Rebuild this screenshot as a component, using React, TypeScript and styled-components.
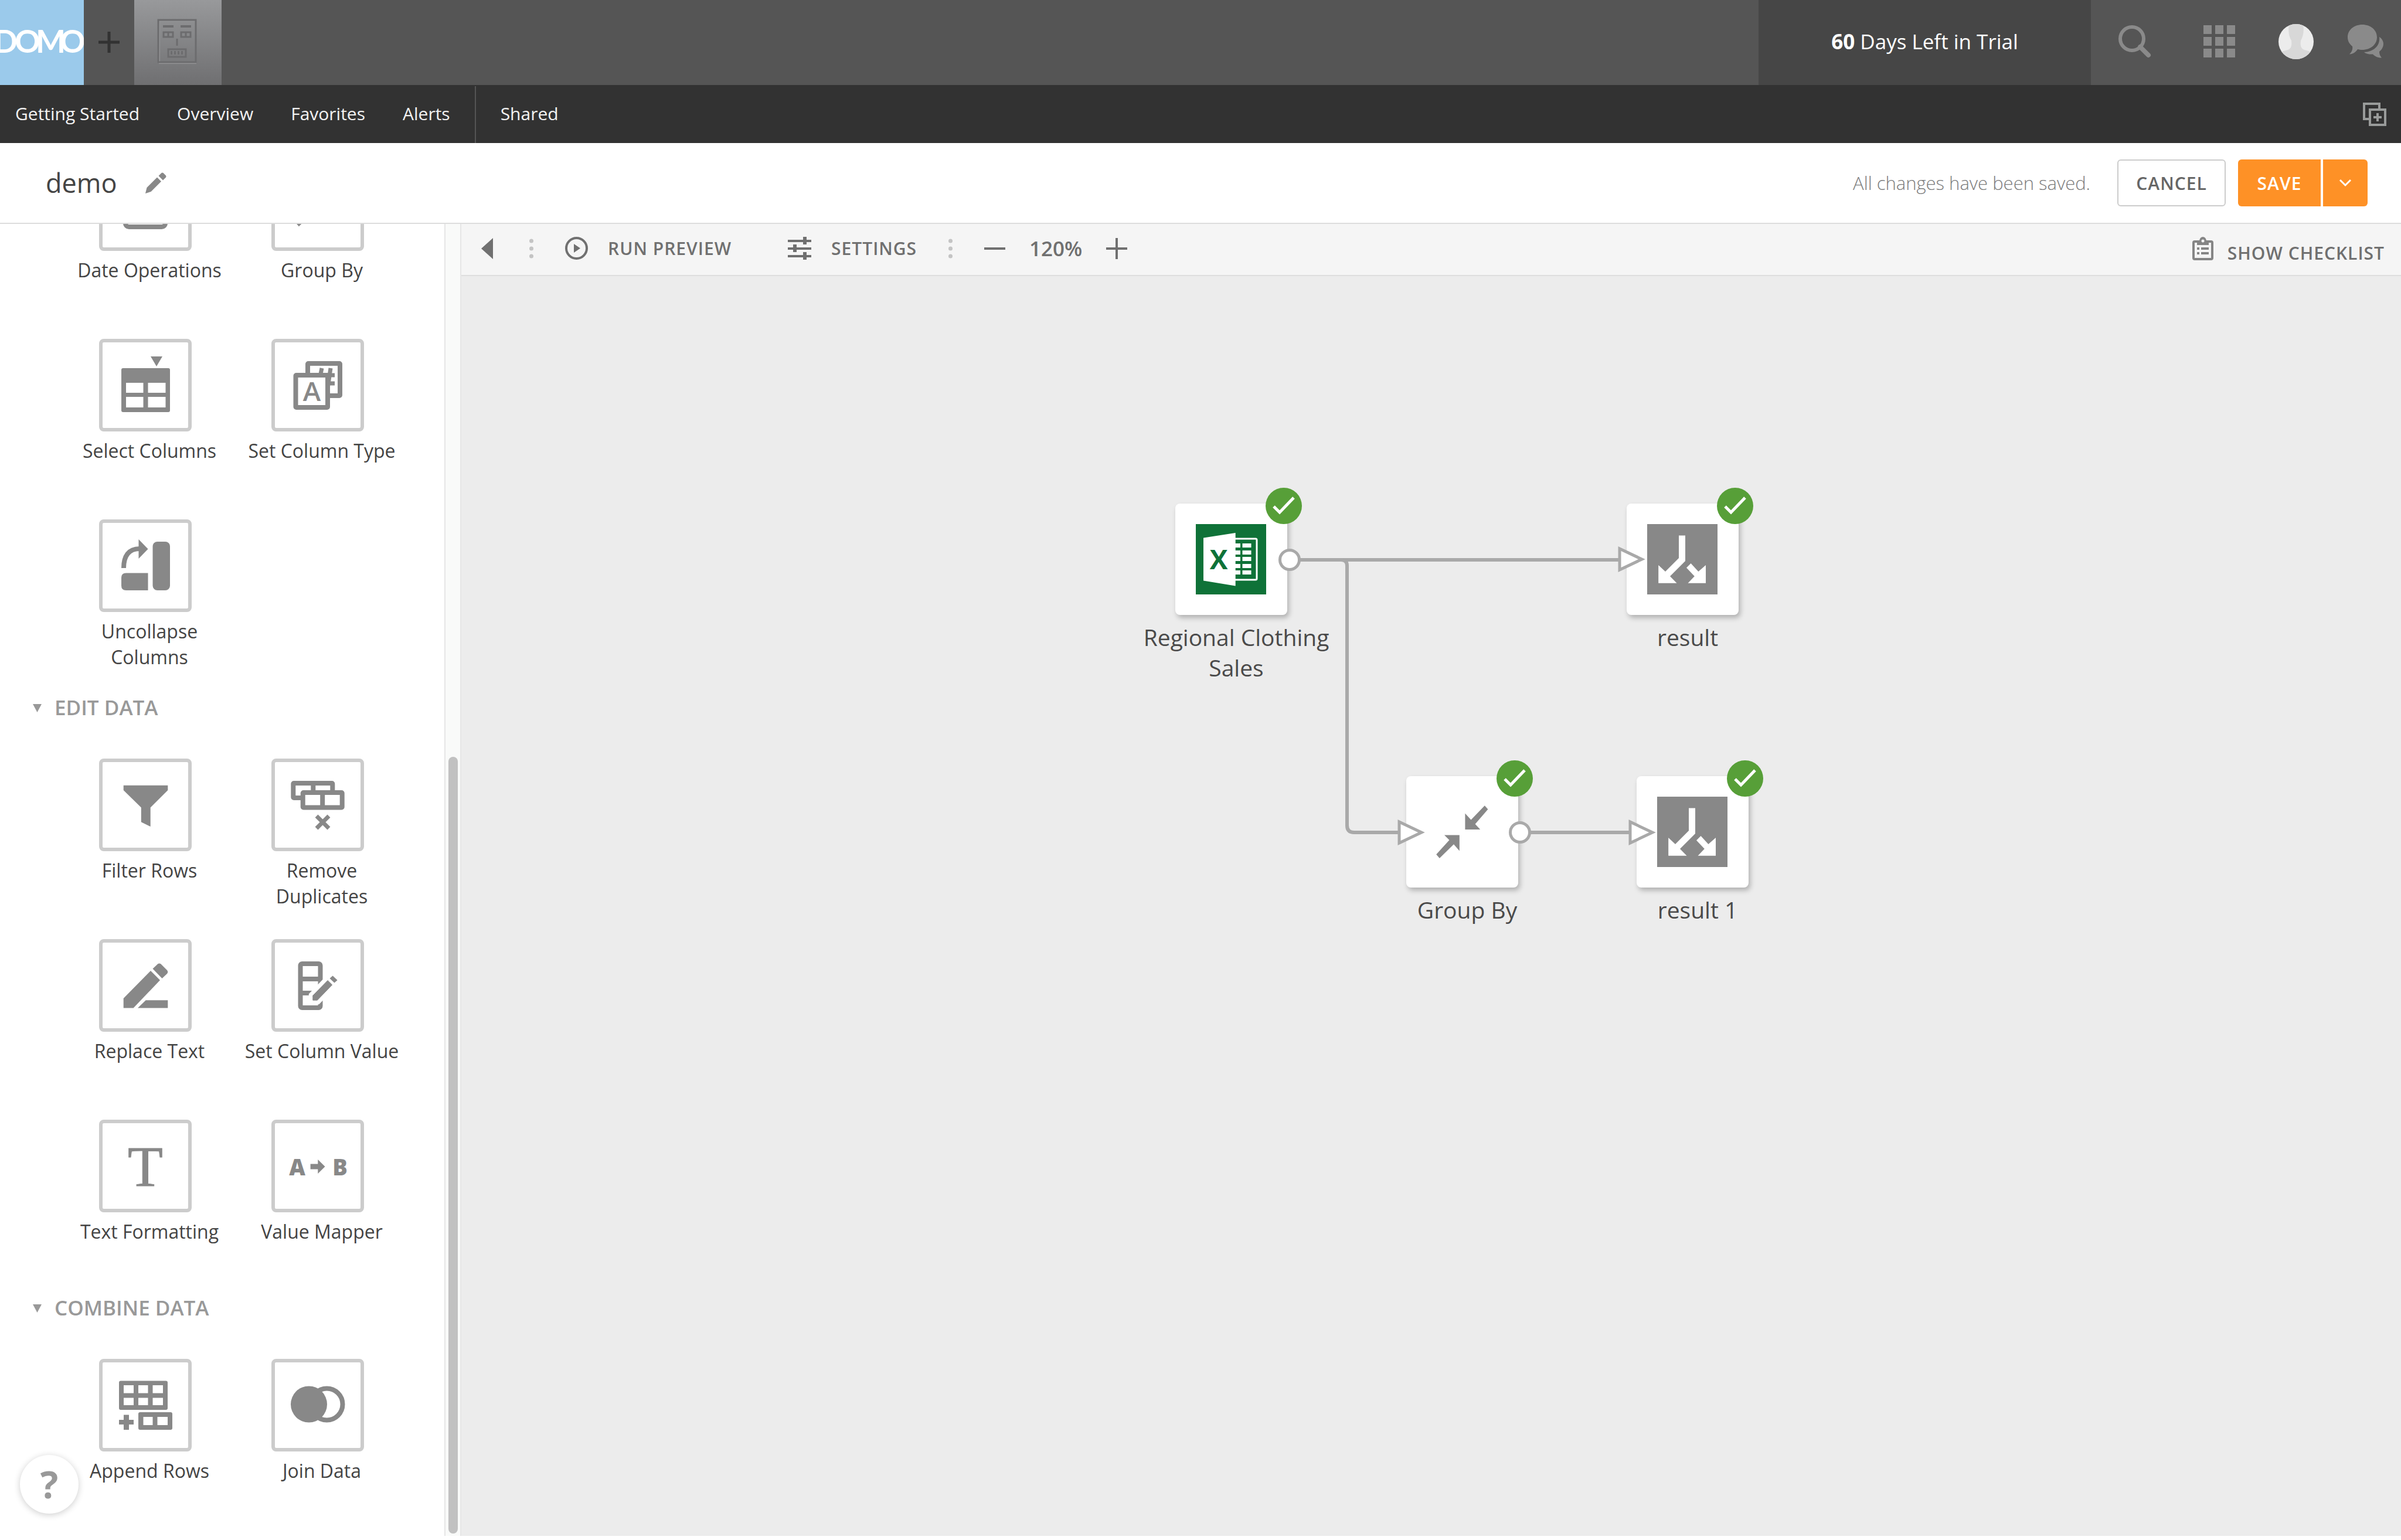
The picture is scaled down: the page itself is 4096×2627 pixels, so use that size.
import React from 'react';
import styled, { createGlobalStyle, css } from 'styled-components';

const GlobalStyle = createGlobalStyle`
  *, *::before, *::after { box-sizing: border-box; }
  body { margin: 0; background: #fff; font-family: "Open Sans", "Noto Sans", sans-serif; color: #444; }
  button { font: inherit; color: inherit; background: none; border: 0; padding: 0; margin: 0; cursor: pointer; }
  h1, h2, p, ul { margin: 0; padding: 0; font-weight: 400; }
  ul { list-style: none; }
  svg { display: block; }
`;

const GREY = '#888';
const TOOL = '#707070';
const WIRE = '#a9a9a9';

const actionText = css`
  font-size: 30px;
  font-weight: 600;
  letter-spacing: 1px;
`;

const Page = styled.div`
  display: flex;
  flex-direction: column;
  height: 100vh;
  padding-bottom: 7px;
  overflow: hidden;
`;

/* ---------- top bar ---------- */

const TopBar = styled.header`
  display: flex;
  flex: none;
  height: 145px;
  background: #555;
`;

const Logo = styled.a`
  width: 143px;
  background: #9bcaeb;
`;

const AddButton = styled.button`
  display: flex;
  align-items: center;
  justify-content: center;
  width: 86px;
  padding-bottom: 2px;
`;

const Brand = styled.button`
  width: 149px;
  background: linear-gradient(#98999b, #6f6f71);
`;

const TopRight = styled.div`
  display: flex;
  margin-left: auto;
`;

const Trial = styled.div`
  display: flex;
  align-items: center;
  justify-content: center;
  width: 567px;
  padding-bottom: 4px;
  background: #464646;
  color: #fff;
  font-size: 35px;
  line-height: 46px;
  white-space: pre;
`;

const TopIcons = styled.div`
  display: flex;
  align-items: center;
  gap: 58px;
  padding: 0 30px 4px 47px;
`;

const IconButton = styled.button<{ $after?: number }>`
  flex: none;
  margin-right: ${(p) => p.$after ?? 0}px;
`;

/* ---------- navigation ---------- */

const Nav = styled.nav`
  display: flex;
  flex: none;
  height: 99px;
  padding-right: 25px;
  background: #323232;
`;

const NavGroup = styled.div<{ $divided?: boolean }>`
  display: flex;
  align-items: center;
  gap: 64px;
  margin-top: 2px;
  padding: 0 42px 4px 42px;
  ${(p) =>
    p.$divided &&
    css`
      padding-left: 26px;
      border-right: 2px solid #555;
    `}
`;

const NavLink = styled.a`
  color: #f2f2f2;
  font-size: 30px;
  line-height: 42px;
  text-decoration: none;
`;

const NavEnd = styled.div`
  display: flex;
  align-items: center;
  margin-left: auto;
`;

/* ---------- title bar ---------- */

const TitleBar = styled.div`
  display: flex;
  flex: none;
  align-items: center;
  height: 138px;
  padding: 0 57px 0 78px;
  border-bottom: 2px solid #ddd;
  background: #fff;
`;

const Title = styled.h1`
  margin-right: 48px;
  color: #444;
  font-size: 45px;
  line-height: 62px;
`;

const Status = styled.p`
  margin: 0 46px 0 auto;
  color: #7c7c7c;
  font-size: 31px;
  font-weight: 300;
  line-height: 42px;
`;

const Cancel = styled.button`
  width: 185px;
  height: 80px;
  margin-right: 21px;
  border: 2px solid #ccc;
  border-radius: 6px;
  color: #666;
  ${actionText}
`;

const SplitButton = styled.div`
  display: flex;
  gap: 4px;
  height: 80px;
  border-radius: 6px;
  overflow: hidden;
`;

const SplitPart = styled.button<{ $width: number }>`
  display: flex;
  align-items: center;
  justify-content: center;
  width: ${(p) => p.$width}px;
  background: #fe9126;
  color: #fff;
  ${actionText}
`;

/* ---------- sidebar ---------- */

const Body = styled.div`
  display: flex;
  flex: 1;
  min-height: 0;
`;

const Sidebar = styled.aside`
  display: flex;
  flex: none;
  width: 787px;
  background: #fff;
`;

const Palette = styled.div`
  display: flex;
  flex: 1;
  flex-direction: column;
  justify-content: flex-end;
  padding-bottom: 47px;
  overflow: hidden;
`;

const Group = styled.section`
  flex: none;
  & + & { padding-top: 53px; }
`;

const GroupHeader = styled.button`
  display: flex;
  align-items: flex-start;
  gap: 22px;
  height: 100px;
  padding-left: 56px;
  color: #999;
  font-size: 35px;
  font-weight: 600;
  line-height: 26px;
  svg { margin-top: 7px; }
`;

const Tiles = styled.ul`
  display: grid;
  grid-template-columns: repeat(2, 294px);
  grid-auto-rows: 255px;
  row-gap: 53px;
  padding-left: 108px;
`;

const TileButton = styled.button`
  display: flex;
  flex-direction: column;
  align-items: center;
  gap: 11px;
  width: 100%;
`;

const TileBox = styled.span`
  width: 158px;
  height: 158px;
  margin-right: 14px;
  border: 6px solid #ccc;
  border-radius: 8px;
`;

const TileLabel = styled.span`
  max-width: 280px;
  color: #444;
  font-size: 32px;
  line-height: 44px;
  text-align: center;
`;

const ScrollTrack = styled.div`
  display: flex;
  flex: none;
  flex-direction: column;
  justify-content: flex-end;
  align-items: center;
  width: 29px;
  padding-bottom: 4px;
  border: solid #e6e6e6;
  border-width: 0 2px;
  background: #f9faf9;
`;

const ScrollThumb = styled.div`
  width: 16px;
  height: 59.3%;
  border-radius: 8px;
  background: #c1c1c1;
`;

const Help = styled.button`
  position: fixed;
  bottom: 45px;
  left: 34px;
  width: 100px;
  height: 100px;
  border-radius: 50%;
  background: #fff;
  box-shadow: 0 2px 12px rgba(0, 0, 0, 0.2);
  color: #999;
  font-size: 64px;
  font-weight: 700;
  line-height: 100px;
`;

/* ---------- workspace ---------- */

const Workspace = styled.main`
  display: flex;
  flex: 1;
  flex-direction: column;
  min-width: 0;
`;

const Toolbar = styled.div`
  display: flex;
  flex: none;
  align-items: center;
  gap: 54px;
  height: 89px;
  padding: 0 28px 4px 34px;
  border-bottom: 2px solid #dedede;
  background: #f5f5f5;
  color: ${TOOL};
`;

const Tool = styled.button<{ $after?: number }>`
  display: flex;
  align-items: center;
  gap: 34px;
  margin-right: ${(p) => p.$after ?? 0}px;
  line-height: 42px;
  ${actionText}
`;

const Zoom = styled.div`
  display: flex;
  align-items: center;
  gap: 41px;
  font-size: 35px;
  font-weight: 600;
  line-height: 46px;
`;

const Checklist = styled.button`
  display: flex;
  align-items: flex-end;
  gap: 24px;
  margin-left: auto;
  line-height: 24px;
  ${actionText}
`;

const Canvas = styled.div`
  position: relative;
  flex: 1;
  overflow: hidden;
  background: #ececec;
`;

const Wires = styled.svg`
  position: absolute;
  top: 0;
  left: 0;
  pointer-events: none;
`;

const NodeBox = styled.div<{ $x: number; $y: number }>`
  position: absolute;
  top: ${(p) => p.$y}px;
  left: ${(p) => p.$x}px;
  display: flex;
  flex-direction: column;
  align-items: center;
  gap: 12px;
  width: 350px;
`;

const NodeCard = styled.button`
  position: relative;
  display: flex;
  align-items: center;
  justify-content: center;
  width: 191px;
  height: 190px;
  margin-right: 18px;
  border-radius: 8px;
  background: #fff;
  box-shadow: 3px 5px 9px rgba(0, 0, 0, 0.25);
`;

const Badge = styled.span`
  position: absolute;
  top: -27px;
  right: -25px;
`;

const NodeLabel = styled.span`
  width: 330px;
  color: #4a4a4a;
  font-size: 39px;
  line-height: 52px;
  text-align: center;
`;

/* ---------- drawings ---------- */

const DomoLogo = () => (
  <svg width="143" height="145" viewBox="0 0 143 145">
    <text x="-11 25 61 102" y="90" fontFamily="Lato" fontWeight="700" fontSize="54" fill="#fff">DOMO</text>
  </svg>
);

const Plus = ({ color, size, weight }: { color: string; size: number; weight: number }) => (
  <svg width={size} height={size} viewBox="0 0 36 36" stroke={color} strokeWidth={weight}>
    <path d="M18 0V36M0 18H36" />
  </svg>
);

const RobotFace = () => (
  <svg width="149" height="145" viewBox="0 0 149 145" fill="none">
    <rect x="43" y="36" width="62" height="72" stroke="#929395" strokeWidth="2" />
    <g stroke="#6c6c6e" strokeWidth="3">
      <rect x="41" y="34" width="64" height="72" />
      <rect x="50" y="55" width="16" height="8" />
      <rect x="80" y="55" width="16" height="8" />
      <path d="M58 54V64M88 54V64M73 66V78" />
      <rect x="58" y="84" width="30" height="13" />
      <path d="M62 90H85" strokeWidth="6" strokeDasharray="3 3" />
    </g>
    <path d="M49 45H67M79 45H97" stroke="#6c6c6e" strokeWidth="4" />
  </svg>
);

const SearchIcon = () => (
  <svg width="56" height="56" viewBox="0 0 56 56" fill="none" stroke="#8a8a8a">
    <circle cx="23" cy="23" r="20" strokeWidth="6" />
    <path d="M37 37L51 51" strokeWidth="8" strokeLinecap="round" />
  </svg>
);

const AppsIcon = () => (
  <svg width="54" height="56" viewBox="0 0 54 56" fill="#8a8a8a">
    {[0, 20, 40].map((y) => [0, 20, 40].map((x) => <rect key={`${x}-${y}`} x={x} y={y} width="14" height="15" />))}
  </svg>
);

const AvatarIcon = () => (
  <svg width="60" height="60" viewBox="0 0 60 60">
    <clipPath id="avatar"><circle cx="30" cy="30" r="30" /></clipPath>
    <g clipPath="url(#avatar)">
      <rect width="60" height="60" fill="#ececec" />
      <path d="M18 0H42C44 12 42 22 38 28C37 36 38 42 44 44C52 46 58 48 60 52V60H0V52C2 48 8 46 16 44C22 42 23 36 22 28C18 22 16 12 18 0Z" fill="#d8d8d8" />
    </g>
  </svg>
);

const ChatIcon = () => (
  <svg width="61" height="58" viewBox="0 0 61 58" fill="#8a8a8a">
    <path d="M25 0C39 0 50 9 50 21.500C50 34 39 43 25 43C22 43 19 42.500 17 42C14 47 9 50 3 50.500C7 47 9 42 8 37C3 33 0 28 0 21.500C0 9 11 0 25 0Z" />
    <path d="M54 21C59 24 61 29 61 33C61 38 58 43 54 46C54 50 55 53 58 56.500C52 57 46 54 43 50.500C37 51 32 50 28 47C43 46.500 56 37 54 21Z" />
  </svg>
);

const AddPageIcon = () => (
  <svg width="40" height="40" viewBox="0 0 40 40" fill="none" stroke="#999b9a" strokeWidth="4">
    <path d="M12 28H2V2H28V12" />
    <rect x="12" y="12" width="26" height="26" />
    <path d="M25 18V32M18 25H32" />
  </svg>
);

const PencilIcon = () => (
  <svg width="36" height="36" viewBox="0 0 36 36" fill="#888">
    <path d="M0 36L2.500 26L20 8.500L27 15.500L9.500 33Z" />
    <path d="M22.500 6L27.500 1Q29 0 30.500 1L35 5.500Q36 7 35 8.500L30 13.500Z" />
  </svg>
);

const ChevronIcon = () => (
  <svg width="22" height="14" viewBox="0 0 22 14" fill="none" stroke="#fff" strokeWidth="3">
    <path d="M2 2L11 11L20 2" />
  </svg>
);

const CollapseIcon = () => (
  <svg width="20" height="36" viewBox="0 0 20 36" fill={TOOL}><path d="M20 0V36L0 18Z" /></svg>
);

const DotsIcon = () => (
  <svg width="7" height="34" viewBox="0 0 7 34" fill="#c4c4c4">
    <circle cx="3.500" cy="4" r="3.500" />
    <circle cx="3.500" cy="17" r="3.500" />
    <circle cx="3.500" cy="30" r="3.500" />
  </svg>
);

const PlayIcon = () => (
  <svg width="39" height="39" viewBox="0 0 39 39">
    <circle cx="19.500" cy="19.500" r="17.500" fill="none" stroke={TOOL} strokeWidth="4" />
    <path d="M15 12V27L26 19.500Z" fill={TOOL} />
  </svg>
);

const SlidersIcon = () => (
  <svg width="40" height="40" viewBox="0 0 40 40" stroke={TOOL} strokeWidth="4">
    <path d="M0 7H40M0 20H40M0 33H40" />
    <path d="M29 0V13M12 13V26M29 26V39" strokeWidth="6" />
  </svg>
);

const MinusIcon = () => (
  <svg width="36" height="36" viewBox="0 0 36 36" stroke={TOOL} strokeWidth="4"><path d="M0 18H36" /></svg>
);

const ClipboardIcon = () => (
  <svg width="36" height="40" viewBox="0 0 36 40">
    <rect x="2" y="8" width="32" height="30" rx="2" fill="none" stroke="#858585" strokeWidth="4" />
    <path d="M8 6H12C13 2 15 0 18 0C21 0 23 2 24 6H28V14H8Z" fill="#858585" />
    <circle cx="18" cy="7" r="2.500" fill="#f5f5f5" />
    <path d="M8 20H12M15 20H28M8 28H12M15 28H28" stroke="#858585" strokeWidth="4" />
  </svg>
);

const Caret = () => (
  <svg width="15" height="14" viewBox="0 0 15 14" fill="#999"><path d="M0 0H15L7.500 14Z" /></svg>
);

const MergeArrows = () => (
  <path
    d="M90.800 100.400H65L73.500 109L51.200 133.500L56.800 140L81 116.300L90.800 127.500ZM100.400 91H126.200L117.600 81.800L139.400 56.600L133.800 50.300L110.500 74.500L100.400 63.600Z"
    fill={GREY}
  />
);

const icons = {
  date: (
    <g fill="none" stroke={GREY} strokeWidth="8">
      <rect x="45" y="46" width="68" height="71" rx="6" />
      <path d="M45 62H113M60 36V50M98 36V50" />
    </g>
  ),
  group: (
    <g transform="translate(79 79) scale(0.83) translate(-95.5 -95)"><MergeArrows /></g>
  ),
  select: (
    <g fill={GREY}>
      <path d="M88 30H108L98 47Z" />
      <path fillRule="evenodd" d="M41 50H118Q121 50 121 53V122Q121 125 118 125H41Q38 125 38 122V53Q38 50 41 50ZM46 75V92H75.500V75ZM83.500 75V92H113.500V75ZM46 99V117H75.500V99ZM83.500 99V117H113.500V99Z" />
    </g>
  ),
  type: (
    <g fill="none" stroke={GREY} strokeWidth="8">
      <rect x="62" y="42" width="55" height="55" rx="1" />
      <path d="M86 50L82 70M101 50L96 84M74 62H108M90 76H108" strokeWidth="7" />
      <rect x="41.500" y="62" width="54.500" height="55" rx="1" fill="#fff" />
      <text x="69" y="106" textAnchor="middle" fontFamily="Open Sans" fontWeight="600" fontSize="46" fill={GREY} stroke="none">A</text>
    </g>
  ),
  uncollapse: (
    <g fill={GREY}>
      <path d="M42 83C42 63 50 50 69 50" fill="none" stroke={GREY} strokeWidth="8" />
      <path d="M67.500 34L83.500 50.500L67.500 67Z" />
      <rect x="91.500" y="38" width="29.500" height="83" rx="8" />
      <path d="M83.500 91.500V121H46Q38 121 38 113V99.500Q38 91.500 46 91.500Z" />
    </g>
  ),
  filter: <path d="M41.700 45.700H117.300V54L87.700 83.400V116L71.800 108.200V83.400L41.700 54Z" fill={GREY} />,
  duplicates: (
    <g fill="none" stroke={GREY} strokeWidth="8">
      <rect x="37.300" y="42" width="67" height="25" rx="1" />
      <path d="M71.300 42V60" />
      <rect x="53.700" y="58" width="67" height="25.500" rx="1" fill="#fff" />
      <path d="M87.200 58V83" />
      <path d="M77 98L98 119M98 98L77 119" strokeWidth="7" />
    </g>
  ),
  replace: (
    <g fill={GREY}>
      <path d="M41.700 101V117.600H58.600L104 70L88 54Z" />
      <path d="M91.500 50.500L100 42.500Q102.700 40.500 105.500 42.500L116 53Q118.500 56 116 59L107.500 67Z" />
      <path d="M66 117.600L79.700 104.200H117.300V117.600Z" />
    </g>
  ),
  value: (
    <g>
      <g fill="none" stroke={GREY} strokeWidth="8">
        <rect x="49.500" y="42" width="34" height="75" rx="3" />
        <path d="M49 68H84M49 92H84" />
      </g>
      <path d="M70.800 96.300V104.200H78.300L112 70L104 62Z" fill="#fff" stroke="#fff" strokeWidth="14" />
      <path d="M70.800 96.300V104.200H78.300L103.600 78L96 70.500Z" fill={GREY} stroke={GREY} />
      <path d="M99.500 67L104.600 62.500L112.600 70L107.400 74.500Z" fill={GREY} />
    </g>
  ),
  text: (
    <text x="79" y="113" textAnchor="middle" fontFamily="Liberation Serif" fontSize="98" fill={GREY} stroke={GREY}>T</text>
  ),
  mapper: (
    <g fill={GREY} fontFamily="Open Sans" fontWeight="800" fontSize="38">
      <text x="44" y="95" textAnchor="middle">A</text>
      <path d="M66.600 75.500H79.300V68L91.500 80L79.300 92V84.500H66.600Z" />
      <text x="117" y="95" textAnchor="middle">B</text>
    </g>
  ),
  append: (
    <g fill={GREY}>
      <path fillRule="evenodd" d="M37 37.500H114Q117 37.500 117 40.500V84Q117 87 114 87H37Q34 87 34 84V40.500Q34 37.500 37 37.500ZM42 45V58.500H59V45ZM67 45V58.500H83.500V45ZM91.500 45V58.500H109V45ZM42 66.500V79H59V66.500ZM67 66.500V79H83.500V66.500ZM91.500 66.500V79H109V66.500Z" />
      <path fillRule="evenodd" d="M70 91H122Q125 91 125 94V118Q125 121 122 121H70Q67 121 67 118V94Q67 91 70 91ZM75.500 99V113H91.500V99ZM99.500 99V113H117V99Z" />
      <path d="M42 95.500H51V104H59V112H51V121H42V112H34V104H42Z" />
    </g>
  ),
  join: (
    <g>
      <circle cx="94.500" cy="77.500" r="27" fill="none" stroke={GREY} strokeWidth="8" />
      <circle cx="64" cy="77.500" r="31" fill={GREY} />
    </g>
  ),
};

type IconName = keyof typeof icons;

const ExcelIcon = () => (
  <svg width="120" height="120" viewBox="0 0 120 120">
    <rect width="120" height="120" fill="#0f7238" />
    <rect x="60" y="25" width="44" height="70" rx="2" fill="none" stroke="#fff" strokeWidth="3" />
    {[33, 45, 56, 68, 79].map((y) => (
      <path key={y} d={`M66 ${y}h10v7h-10zM79.500 ${y}h15v7h-15z`} fill="#fff" />
    ))}
    <path d="M13 23.500L67.700 15V105.500L13 96.500Z" fill="#fff" />
    <text x="39" y="77" textAnchor="middle" fontFamily="Open Sans" fontWeight="700" fontSize="46" fill="#0f7238">X</text>
  </svg>
);

const OutputIcon = () => (
  <svg width="120" height="120" viewBox="0 0 120 120">
    <rect width="120" height="120" fill={GREY} />
    <path
      d="M54 19.500H65V63L39 89L50.500 100.700H19.200V70L31 81L54 58ZM74.500 67L87.400 81L100 70V100.700H69.500L80.800 89L67 74.500Z"
      fill="#fff"
    />
  </svg>
);

const GroupIcon = () => (
  <svg width="191" height="190" viewBox="0 0 191 190"><MergeArrows /></svg>
);

const CheckIcon = () => (
  <svg width="62" height="62" viewBox="0 0 62 62">
    <circle cx="31" cy="31" r="31" fill="#579f38" />
    <path d="M14 32L24 42L48 17" fill="none" stroke="#fff" strokeWidth="5" />
  </svg>
);

/* ---------- data ---------- */

type PaletteGroup = { title?: string; tiles: { icon: IconName; label: string }[] };

const groups: PaletteGroup[] = [
  {
    tiles: [
      { icon: 'date', label: 'Date Operations' },
      { icon: 'group', label: 'Group By' },
      { icon: 'select', label: 'Select Columns' },
      { icon: 'type', label: 'Set Column Type' },
      { icon: 'uncollapse', label: 'Uncollapse Columns' },
    ],
  },
  {
    title: 'EDIT DATA',
    tiles: [
      { icon: 'filter', label: 'Filter Rows' },
      { icon: 'duplicates', label: 'Remove Duplicates' },
      { icon: 'replace', label: 'Replace Text' },
      { icon: 'value', label: 'Set Column Value' },
      { icon: 'text', label: 'Text Formatting' },
      { icon: 'mapper', label: 'Value Mapper' },
    ],
  },
  {
    title: 'COMBINE DATA',
    tiles: [
      { icon: 'append', label: 'Append Rows' },
      { icon: 'join', label: 'Join Data' },
    ],
  },
];

const nodes = [
  { x: 1147, y: 388, label: 'Regional Clothing Sales', icon: <ExcelIcon /> },
  { x: 1917, y: 388, label: 'result', icon: <OutputIcon /> },
  { x: 1541, y: 853, label: 'Group By', icon: <GroupIcon /> },
  { x: 1934, y: 853, label: 'result 1', icon: <OutputIcon /> },
];

const outputs = [[1413, 484], [1806, 949]];
const inputs = [[1976, 483], [1600, 949], [1994, 949]];

export default function App() {
  return (
    <Page>
      <GlobalStyle />
      <TopBar>
        <Logo href="#" aria-label="Domo home"><DomoLogo /></Logo>
        <AddButton aria-label="Add"><Plus color="#323232" size={36} weight={5} /></AddButton>
        <Brand aria-label="Company"><RobotFace /></Brand>
        <TopRight>
          <Trial><strong>60</strong> Days Left in Trial</Trial>
          <TopIcons>
            <IconButton aria-label="Search" $after={31}><SearchIcon /></IconButton>
            <IconButton aria-label="Apps" $after={16}><AppsIcon /></IconButton>
            <IconButton aria-label="Profile"><AvatarIcon /></IconButton>
            <IconButton aria-label="Chat"><ChatIcon /></IconButton>
          </TopIcons>
        </TopRight>
      </TopBar>

      <Nav>
        <NavGroup $divided>
          <NavLink href="#">Getting Started</NavLink>
          <NavLink href="#">Overview</NavLink>
          <NavLink href="#">Favorites</NavLink>
          <NavLink href="#">Alerts</NavLink>
        </NavGroup>
        <NavGroup><NavLink href="#">Shared</NavLink></NavGroup>
        <NavEnd><IconButton aria-label="Add page"><AddPageIcon /></IconButton></NavEnd>
      </Nav>

      <TitleBar>
        <Title>demo</Title>
        <IconButton aria-label="Rename"><PencilIcon /></IconButton>
        <Status>All changes have been saved.</Status>
        <Cancel>CANCEL</Cancel>
        <SplitButton>
          <SplitPart $width={141}>SAVE</SplitPart>
          <SplitPart $width={76} aria-label="Save options"><ChevronIcon /></SplitPart>
        </SplitButton>
      </TitleBar>

      <Body>
        <Sidebar>
          <Palette>
            {groups.map((g, i) => (
              <Group key={i}>
                {g.title && <GroupHeader><Caret />{g.title}</GroupHeader>}
                <Tiles>
                  {g.tiles.map((t) => (
                    <li key={t.label}>
                      <TileButton>
                        <TileBox><svg width="146" height="146" viewBox="6 6 146 146">{icons[t.icon]}</svg></TileBox>
                        <TileLabel>{t.label}</TileLabel>
                      </TileButton>
                    </li>
                  ))}
                </Tiles>
              </Group>
            ))}
          </Palette>
          <ScrollTrack><ScrollThumb /></ScrollTrack>
        </Sidebar>

        <Workspace>
          <Toolbar>
            <IconButton aria-label="Collapse panel" $after={8}><CollapseIcon /></IconButton>
            <DotsIcon />
            <Tool $after={42}><PlayIcon />RUN PREVIEW</Tool>
            <Tool><SlidersIcon />SETTINGS</Tool>
            <DotsIcon />
            <Zoom>
              <IconButton aria-label="Zoom out"><MinusIcon /></IconButton>
              120%
              <IconButton aria-label="Zoom in"><Plus color={TOOL} size={36} weight={4} /></IconButton>
            </Zoom>
            <Checklist><ClipboardIcon />SHOW CHECKLIST</Checklist>
          </Toolbar>

          <Canvas>
            <Wires width="2400" height="1200" viewBox="0 0 2400 1200" fill="none" stroke={WIRE} strokeWidth="6">
              <path d="M1413 484H1974" />
              <path d="M1413 484H1501Q1511 484 1511 494V937Q1511 949 1523 949H1600" />
              <path d="M1806 949H1994" />
            </Wires>
            {nodes.map((n) => (
              <NodeBox key={n.label} $x={n.x} $y={n.y}>
                <NodeCard aria-label={n.label}>
                  {n.icon}
                  <Badge><CheckIcon /></Badge>
                </NodeCard>
                <NodeLabel>{n.label}</NodeLabel>
              </NodeBox>
            ))}
            <Wires width="2400" height="1200" viewBox="0 0 2400 1200" fill="#fff" stroke={WIRE} strokeWidth="5">
              {outputs.map(([x, y]) => <circle key={x} cx={x} cy={y} r="16.500" />)}
              {inputs.map(([x, y]) => <path key={x} d={`M${x} ${y - 18}V${y + 18}L${x + 38} ${y}Z`} />)}
            </Wires>
          </Canvas>
        </Workspace>
      </Body>
      <Help aria-label="Help">?</Help>
    </Page>
  );
}
